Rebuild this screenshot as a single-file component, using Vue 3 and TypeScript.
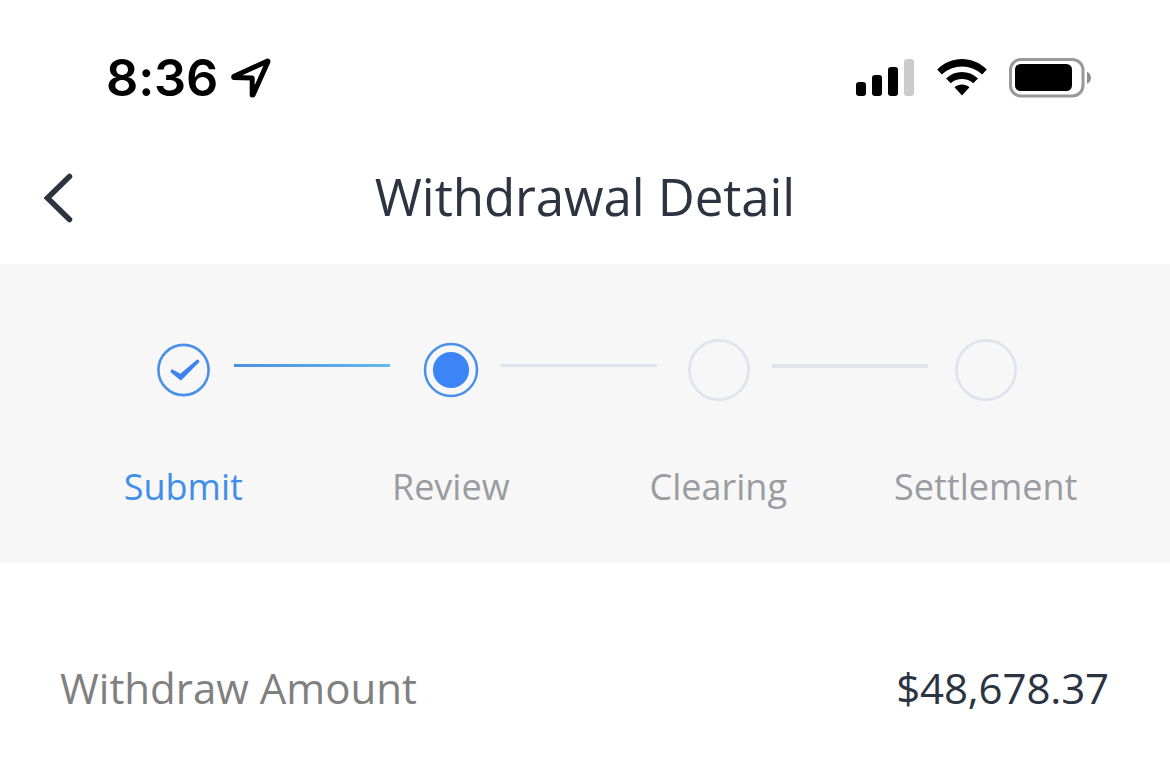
<script setup lang="ts">
type StepState = 'done' | 'active' | 'pending'

interface Step {
  label: string
  state: StepState
}

const steps: Step[] = [
  { label: 'Submit', state: 'done' },
  { label: 'Review', state: 'active' },
  { label: 'Clearing', state: 'pending' },
  { label: 'Settlement', state: 'pending' },
]
</script>

<template>
  <main class="screen">
    <div class="status-bar">
      <div class="clock">
        <span class="time">8:36</span>
        <svg class="location" width="44" height="44" viewBox="0 0 44 44">
          <path d="M5.7 20.6 L39.2 5.2 Q40.2 4.9 39.8 5.9 L25 39 L24.2 39 L24.2 22 L5.7 21.6 Z" />
        </svg>
      </div>
      <div class="indicators">
        <svg width="60" height="40" viewBox="0 0 60 40">
          <rect x="1" y="24" width="10" height="14" rx="3" />
          <rect x="17" y="17" width="10" height="21" rx="3" />
          <rect x="33" y="9" width="10" height="29" rx="3" />
          <rect x="49" y="1" width="10" height="37" rx="3" fill="#cbcbcb" />
        </svg>
        <svg class="wifi" width="52" height="40" viewBox="0 0 52 40">
          <path d="M1.2 11.6 C15 -2.4 37 -2.4 50.8 11.6 L46.2 16.5 C34.8 5.8 17.2 5.8 5.8 16.5 Z" />
          <path d="M10 20.4 C19 11.8 33 11.8 42 20.4 L37.2 25.2 C31 19.6 21 19.6 14.8 25.2 Z" />
          <path d="M18.5 29.2 C22.8 25.7 29.2 25.7 33.5 29.2 L26 37.6 Z" />
        </svg>
        <svg class="battery" width="84" height="40" viewBox="0 0 84 40">
          <rect x="1.5" y="1.5" width="72.5" height="36.5" rx="10.5" fill="none" stroke="#999" stroke-width="3" />
          <rect x="6" y="6" width="57" height="27" rx="5.5" />
          <path d="M78 13.7 C83.2 15.6 83.2 24 78 25.7 Z" fill="#8c8c8c" />
        </svg>
      </div>
    </div>

    <header class="header">
      <svg class="back" width="34" height="54" viewBox="0 0 34 54">
        <path d="M29.5 6.5 L7.5 28 L29.5 49.5" />
      </svg>
      <h1 class="title"><span>Withdrawal Detail</span></h1>
    </header>

    <section class="progress">
      <div class="track">
        <template v-for="(step, i) in steps" :key="step.label">
          <span v-if="i > 0" :class="['line', `line-${i}`]"></span>
          <svg class="marker" width="62" height="62" viewBox="0 0 62 62">
            <template v-if="step.state === 'done'">
              <circle cx="31.5" cy="31" r="25.1" fill="none" stroke="#4a90e8" stroke-width="2.6" />
              <path class="check" d="M20 31.4 L28.4 36 L45.6 21.6 L46.3 22.4 L28.8 40.2 L19.7 32.6 Z" />
            </template>
            <template v-else-if="step.state === 'active'">
              <circle cx="31" cy="31" r="26" fill="none" stroke="#4a90e8" stroke-width="2.5" />
              <circle cx="31" cy="31" r="18.1" fill="#3d85f7" />
            </template>
            <circle v-else cx="31" cy="31" r="29.6" fill="none" stroke="#e1e3ee" stroke-width="2.8" />
          </svg>
        </template>
      </div>
      <div class="labels">
        <span v-for="step in steps" :key="step.label" :class="['label', step.state]">{{ step.label }}</span>
      </div>
    </section>

    <section class="row">
      <span class="name">Withdraw Amount</span>
      <span class="amount">$48,678.37</span>
    </section>
  </main>
</template>

<style>
body {
  margin: 0;
  background: #fff;
}
</style>

<style scoped>
.screen {
  width: 1170px;
  height: 761px;
  overflow: hidden;
  background: #fff;
  font-family: "Open Sans", "Noto Sans", sans-serif;
  color: #2c3341;
}

.status-bar {
  height: 130px;
  box-sizing: border-box;
  padding: 48px 77px 0 106px;
  display: flex;
  justify-content: space-between;
  align-items: flex-start;
}

.clock {
  display: flex;
  color: #000;
}

.time {
  width: 112px;
  font: 600 50.5px/60px Inter, sans-serif;
  letter-spacing: -0.2px;
  white-space: nowrap;
}

.location {
  margin: 8px 0 0 10px;
  fill: none;
  stroke: #000;
  stroke-width: 5;
  stroke-linejoin: round;
}

.indicators {
  display: flex;
  padding-top: 10px;
}

.wifi {
  margin-left: 20.5px;
}

.battery {
  margin-left: 21.5px;
}

.header {
  height: 134px;
  display: grid;
  grid-template-columns: 80px 1fr 80px;
}

.back {
  margin: 40px 0 0 40px;
  fill: none;
  stroke: #2c3341;
  stroke-width: 5.5;
  stroke-linecap: round;
}

.title {
  margin: 0;
  padding-top: 31px;
  text-align: center;
  font-size: 51px;
  line-height: 70px;
  font-weight: 400;
  letter-spacing: -0.08px;
  white-space: nowrap;
}

.progress {
  height: 299px;
  background: #f7f7f7;
  display: flex;
  flex-direction: column;
}

.track {
  display: flex;
  padding: 75px 0 0 152px;
}

.marker {
  flex: none;
}

.check {
  fill: #3c83ee;
  stroke: #3c83ee;
  stroke-width: 2.2;
  stroke-linejoin: round;
}

.line {
  flex: none;
  width: 156px;
  height: 3px;
  margin-top: 25px;
  background: #e1e3ee;
}

.line-1 {
  margin-left: 20px;
  margin-right: 30px;
  background: linear-gradient(90deg, #4a90e2, #63b8ec);
}

.line-2 {
  margin-left: 19px;
  margin-right: 31px;
}

.line-3 {
  height: 4px;
  margin-left: 22px;
  margin-right: 27px;
}

.labels {
  display: grid;
  grid-template-columns: repeat(4, 1fr);
  padding: 61px 50.5px 0 49.5px;
}

.label {
  text-align: center;
  font-size: 36px;
  line-height: 50px;
  color: #999ca1;
}

.label.done {
  color: #418eea;
}

.row {
  display: flex;
  justify-content: space-between;
  padding: 95px 61px 0 60px;
  font-size: 42px;
  line-height: 60px;
}

.name {
  color: #808080;
}

.amount {
  letter-spacing: -0.12px;
}
</style>
